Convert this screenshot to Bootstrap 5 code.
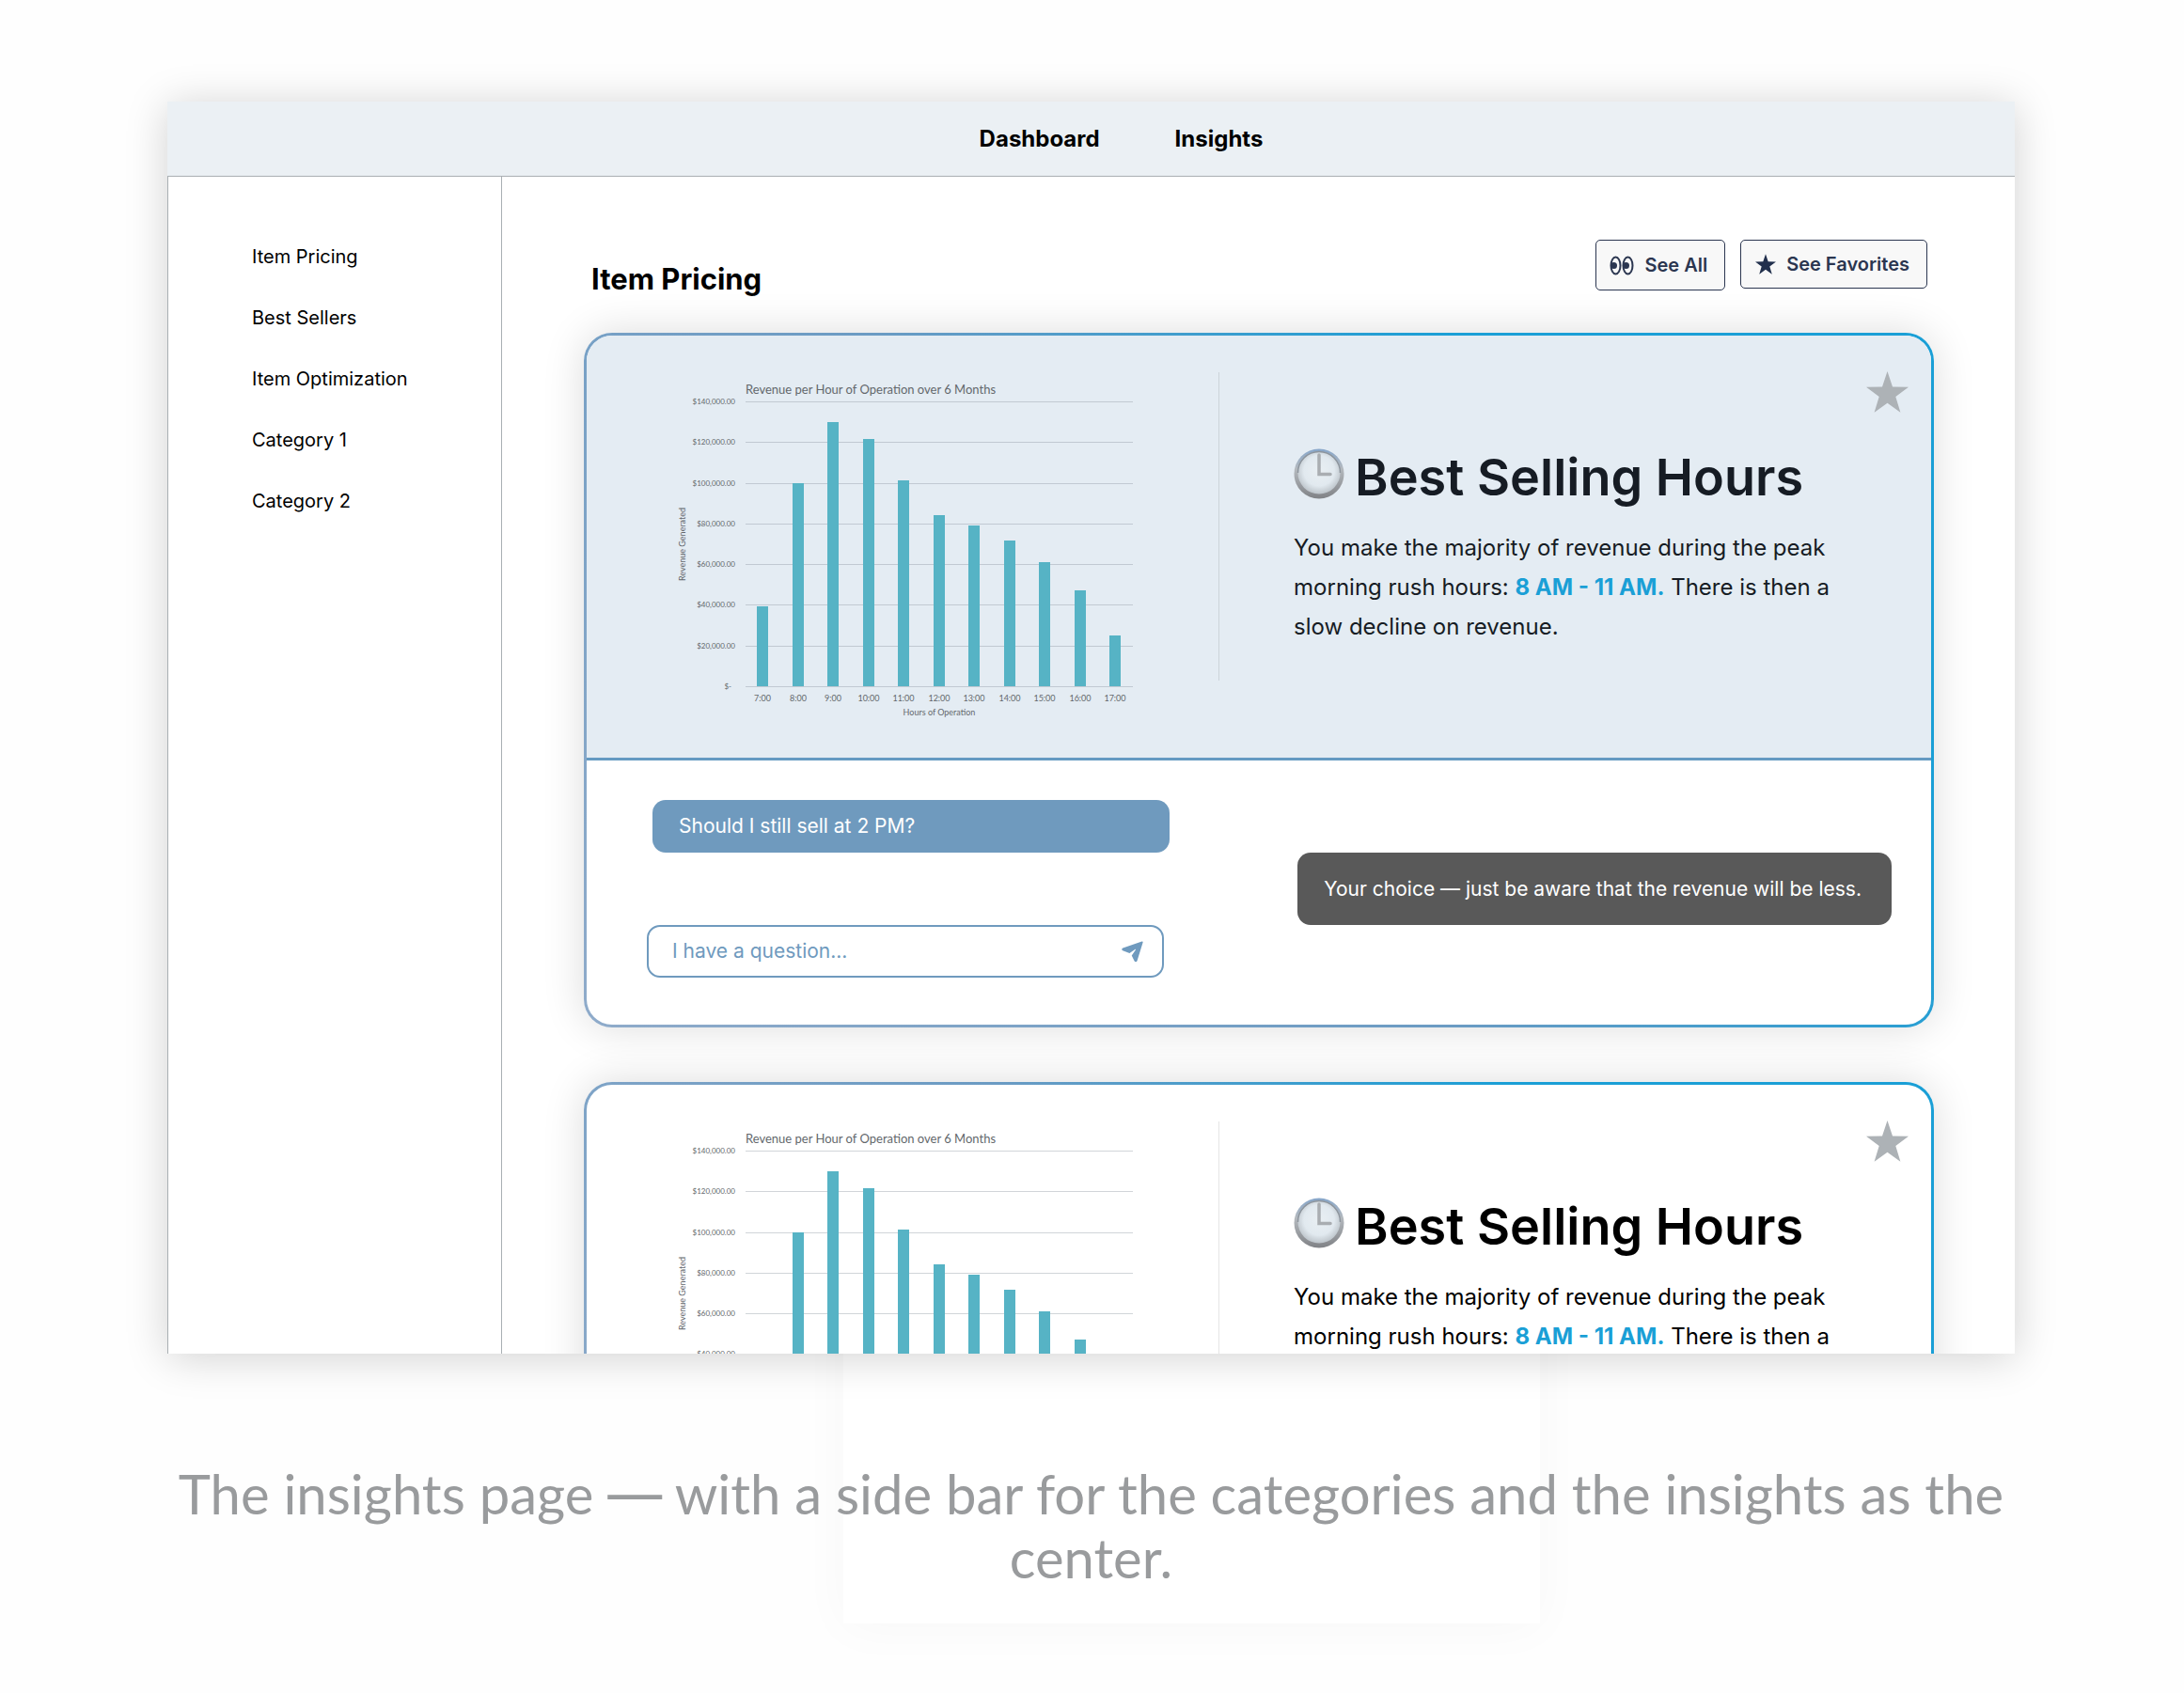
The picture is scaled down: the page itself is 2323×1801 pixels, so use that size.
<!DOCTYPE html>
<html lang="en">
<head>
<meta charset="utf-8">
<meta name="viewport" content="width=device-width, initial-scale=1">
<title>Insights</title>
<link href="https://cdn.jsdelivr.net/npm/bootstrap@5.3.0/dist/css/bootstrap.min.css" rel="stylesheet">
<style>
:root { --line: #a9afb3; --blue: #6f9abe; --sky: #1a9fd6; --ink: #2b3650; }
body { font-family: Inter, "Liberation Sans", sans-serif; color: #000; background: #fefefe; min-height: 100vh; overflow-x: hidden; }
a { color: inherit; text-decoration: none; }
.stage { padding: 108px 180px 40px 178px; position: relative; }
.app-window { background: #fff; max-height: 1332px; overflow: hidden; position: relative; z-index: 1; box-shadow: 0 4px 42px rgba(0,0,0,.18); }
.topbar { background: #ebf0f4; border-bottom: 1px solid var(--line); height: 80px; gap: 80px; padding-right: 64px; padding-left: 128px; font-size: 24px; font-weight: 700; }
.shell { border-left: 1px solid var(--line); }
.side { flex: 0 0 355px; border-right: 1px solid var(--line); padding: 70px 24px 70px 89px; gap: 35px; font-size: 20px; line-height: 30px; }
.content-area { padding: 67px 86px 60px 87px; min-width: 0; }
.toolbar-row { padding: 0 7px 0 8px; margin-bottom: 39px; }
.page-title { font-size: 31px; line-height: 36px; font-weight: 700; }
.btn-tool { display: flex; align-items: center; gap: 11px; border: 1px solid var(--ink); border-radius: 5px; background: #f8f8f8; color: var(--ink); font-size: 20px; font-weight: 600; line-height: 30px; padding: 10px 18px 10px 15px; }
.btn-all { padding: 11px 18px 11px 14px; }
.insight { border: 3px solid transparent; border-radius: 30px; margin-bottom: 58px;
  background: linear-gradient(#fff,#fff) padding-box, linear-gradient(50deg,#8fabca 0%,#6b9bc3 45%,#1a9fd6 75%) border-box;
  box-shadow: 0 0 45px rgba(0,0,0,.14); }
.insight-top { position: relative; padding: 39px 0 40px; border-bottom: 3px solid #659ac2; border-radius: 27px 27px 0 0; }
.picked .insight-top { background: #e4ecf3; }
.picked h2, .picked p { color: #161c24; }
.chart-col { flex: 0 0 47%; padding-left: 91px; }
.chart-col svg { display: block; width: 500px; height: 370px; }
.chart-col text { font-family: Lato, "Liberation Sans", sans-serif; font-size: 9px; fill: #63686c; }
.chart-col .money { font-size: 8px; }
.chart-col .chart-title { font-size: 13px; }
.rule { flex: 0 0 1px; height: 328px; background: #000; opacity: .1; }
.text-col { padding: 80px 100px 0 79px; }
.text-col h2 { font-size: 54px; line-height: 64px; font-weight: 600; gap: 11px; margin-bottom: 22px; }
.text-col p { font-size: 24px; line-height: 42px; }
.text-col strong { color: var(--sky); }
.fav { position: absolute; top: 38px; right: 24px; border: 0; background: none; padding: 0; line-height: 0; }
.chat { padding: 42px 42px 50px 64px; font-size: 21px; }
.ask-col { flex: 0 0 42%; gap: 77px; }
.bubble-q { background: var(--blue); color: #fff; border-radius: 14px; margin-left: 6px; height: 56px; padding: 0 28px; }
.bubble-a { background: #595959; color: #fff; border-radius: 14px; height: 77px; padding: 0 32px 0 28px; margin-top: 56px; }
.ask { border: 2px solid var(--blue); border-radius: 14px; margin-right: 6px; height: 56px; padding: 0 20px 0 25px; }
.ask input { border: 0; outline: 0; background: none; color: var(--blue); flex: 1; min-width: 0; padding: 0; }
.ask input::placeholder { color: var(--blue); opacity: 1; }
.ask button { border: 0; background: none; padding: 0; line-height: 0; }
.legend-text { font-family: Lato, sans-serif; font-size: 58px; line-height: 68px; color: #999b9d; text-align: center; margin: 115px 0 0; position: relative; z-index: 2; }
.legend-text span { font-family: Inter, sans-serif; line-height: 1; }
.ghost { position: absolute; top: 1200px; height: 527px; left: 897px; width: 741px; background: #fff; box-shadow: 0 4px 50px rgba(0,0,0,.03); }
</style>
</head>
<body>
<svg width="0" height="0" class="position-absolute" aria-hidden="true">
  <defs>
    <linearGradient id="rim" x1="0" y1="0" x2="0" y2="1"><stop offset="0" stop-color="#86a6ca"/><stop offset=".4" stop-color="#b4b9be"/><stop offset="1" stop-color="#808286"/></linearGradient>
    <radialGradient id="face" cx=".5" cy=".45" r=".6"><stop offset="0" stop-color="#e9eff3"/><stop offset=".6" stop-color="#e1e9ef"/><stop offset="1" stop-color="#b3bac0"/></radialGradient>
    <symbol id="star" viewBox="0 0 45 44"><path d="M22.500 0l5.500 16.500 17 .200-13.700 10.300 5.100 16.800-13.900-10-13.900 10 5.100-16.800L0 16.700l17-.200z"/></symbol>
    <symbol id="clock" viewBox="0 0 54 54"><circle cx="27" cy="27" r="26.500" fill="url(#rim)"/><circle cx="27" cy="26" r="22.500" fill="url(#face)"/><path d="M4.500 26a22.500 22.500 0 0 1 45 0" fill="none" stroke="#8d959d" stroke-width="1.500"/><path d="M27 7v20.500H39" fill="none" stroke="#a9adb1" stroke-width="3.500" stroke-linecap="round"/></symbol>
    <symbol id="plane" viewBox="0 0 24 24"><path d="M22.500.6c.8-.3 1.300.2 1.100 1l-6.400 20.600c-.5 1.400-2.200 1.500-2.900.3l-3.100-6.200 4.300-6.300c.3-.6-.2-1-.7-.7L8.800 13.500 1.300 10.800C-.1 10.200 0 8.400 1.400 7.900z"/></symbol>
  </defs>
</svg>
<div class="stage">
  <div class="ghost"></div>
  <div class="app-window">
    <nav class="topbar d-flex align-items-center justify-content-center">
      <a href="#">Dashboard</a><a href="#">Insights</a>
    </nav>
    <div class="shell d-flex">
      <nav class="side d-flex flex-column">
        <a href="#">Item Pricing</a><a href="#">Best Sellers</a><a href="#">Item Optimization</a><a href="#">Category 1</a><a href="#">Category 2</a>
      </nav>
      <main class="content-area flex-grow-1">
        <div class="toolbar-row d-flex justify-content-between align-items-start">
          <h1 class="page-title mt-4 mb-0 pt-0">Item Pricing</h1>
          <div class="d-flex align-items-start gap-3">
            <button type="button" class="btn-tool btn-all"><svg width="26" height="21" viewBox="0 0 26 21"><g fill="none" stroke="#2b3650" stroke-width="2"><ellipse cx="6.500" cy="10.500" rx="5" ry="9"/><ellipse cx="19.500" cy="10.500" rx="5" ry="9"/></g><g fill="#2b3650"><circle cx="4.500" cy="10.500" r="3.500"/><circle cx="17.500" cy="10.500" r="3.500"/></g></svg>See All</button>
            <button type="button" class="btn-tool"><svg width="22" height="22" fill="#22304d"><use href="#star"/></svg>See Favorites</button>
          </div>
        </div>

        <article class="insight picked">
          <div class="insight-top d-flex align-items-start">
            <div class="chart-col"><svg class="revenue-chart" viewBox="715 395 500 370" role="img" aria-label="Revenue per hour"></svg></div>
            <div class="rule"></div>
            <div class="text-col flex-grow-1">
              <h2 class="d-flex align-items-center"><svg width="54" height="54" class="flex-shrink-0 mb-2"><use href="#clock"/></svg>Best Selling Hours</h2>
              <p class="mb-0">You make the majority of revenue during the peak morning rush hours: <strong>8 AM - 11 AM.</strong> There is then a slow decline on revenue.</p>
            </div>
            <button type="button" class="fav" aria-label="Favorite"><svg width="45" height="44" fill="#adb2b6"><use href="#star"/></svg></button>
          </div>
          <div class="chat d-flex justify-content-between align-items-start">
            <div class="ask-col d-flex flex-column">
              <div class="bubble-q d-flex align-items-center">Should I still sell at 2 PM?</div>
              <form class="ask d-flex align-items-center"><input type="text" placeholder="I have a question..." aria-label="I have a question"><button type="button" aria-label="Send"><svg width="23" height="23" fill="#6f9abe"><use href="#plane"/></svg></button></form>
            </div>
            <div class="bubble-a d-flex align-items-center">Your choice — just be aware that the revenue will be less.</div>
          </div>
        </article>

        <article class="insight">
          <div class="insight-top d-flex align-items-start">
            <div class="chart-col"><svg class="revenue-chart" viewBox="715 395 500 370" role="img" aria-label="Revenue per hour"></svg></div>
            <div class="rule"></div>
            <div class="text-col flex-grow-1">
              <h2 class="d-flex align-items-center"><svg width="54" height="54" class="flex-shrink-0 mb-2"><use href="#clock"/></svg>Best Selling Hours</h2>
              <p class="mb-0">You make the majority of revenue during the peak morning rush hours: <strong>8 AM - 11 AM.</strong> There is then a</p>
            </div>
            <button type="button" class="fav" aria-label="Favorite"><svg width="45" height="44" fill="#adb2b6"><use href="#star"/></svg></button>
          </div>
        </article>
      </main>
    </div>
  </div>
  <p class="legend-text">The insights page <span>—</span> with a side bar for the categories and the insights as the center.</p>
</div>
<script src="https://cdn.jsdelivr.net/npm/bootstrap@5.3.0/dist/js/bootstrap.bundle.min.js"></script>
<script>
// Hourly revenue, drawn as a bar chart in every card
const revenue = [39500, 100000, 130000, 121500, 101000, 84300, 78800, 71500, 61200, 47000, 25000];
const base = 729, top140 = 426, left = 793, right = 1205;
const y = v => Math.round(base - v * (base - top140) / 140000);
let out = `<text class="chart-title" x="${left}" y="418">Revenue per Hour of Operation over 6 Months</text>`;
for (let v = 0; v <= 140000; v += 20000) {
  const label = v ? '$' + v.toLocaleString('en-US') + '.00' : '$-';
  out += `<rect x="${left}" y="${y(v)}" width="${right - left}" height="1" fill="#8c979f" fill-opacity=".4"/>`;
  out += `<text class="money" x="${v ? 782 : 778}" y="${y(v) + 3}" text-anchor="end">${label}</text>`;
}
revenue.forEach((v, i) => {
  const cx = Math.round(811 + i * 37.5);
  out += `<rect x="${cx - 6}" y="${y(v)}" width="12" height="${base - y(v)}" fill="#56b3c5"/>`;
  out += `<text x="${cx}" y="745" text-anchor="middle">${7 + i}:00</text>`;
});
out += `<text x="999" y="760" text-anchor="middle">Hours of Operation</text>`;
out += `<text transform="translate(729 578) rotate(-90)" text-anchor="middle">Revenue Generated</text>`;
document.querySelectorAll('.revenue-chart').forEach(s => s.innerHTML = out);
</script>
</body>
</html>
